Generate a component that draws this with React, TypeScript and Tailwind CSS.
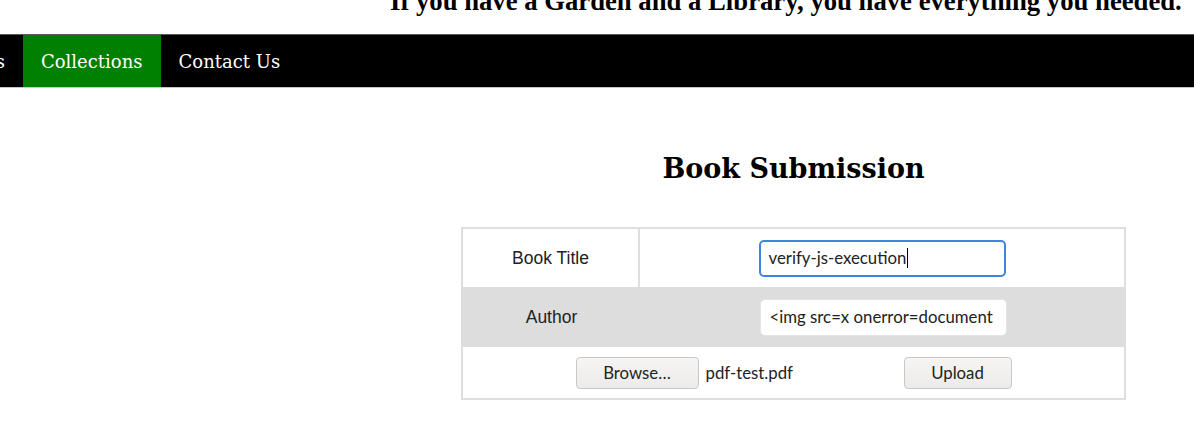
export default function App() {
  return (
    <div className="w-[1194px] h-[437px] overflow-hidden bg-white relative">
      <div className="h-[34px] overflow-hidden">
        <h3
          className="mt-[-13px] ml-[390px] whitespace-nowrap text-[26.7px] font-bold text-black leading-[28px]"
          style={{ fontFamily: '"Liberation Serif", serif' }}
        >
          If you have a Garden and a Library, you have everything you needed.
        </h3>
      </div>
      <nav
        className="flex h-[54px] bg-black border-t border-t-[#5a5a5a] border-b border-b-[#c8c8c8] text-[18px] text-white"
        style={{ fontFamily: '"DejaVu Serif", serif' }}
      >
        <a className="flex items-center justify-end pr-[18px] w-[94px] ml-[-71px] shrink-0 whitespace-nowrap">Books</a>
        <a className="flex items-center px-[18px] bg-[#008000] whitespace-nowrap">Collections</a>
        <a className="flex items-center px-[18px] whitespace-nowrap">Contact Us</a>
      </nav>
      <div className="ml-[461px] w-[665px]">
        <h2
          className="mt-[64px] text-center text-[27px] font-bold text-black leading-[34px]"
          style={{ fontFamily: '"DejaVu Serif", serif' }}
        >
          Book Submission
        </h2>
        <div
          className="mt-[41px] border-2 border-[#dedede] text-[17.5px] text-[#222]"
          style={{ fontFamily: '"Liberation Sans", sans-serif' }}
        >
          <div className="flex h-[58px]">
            <div className="w-[177px] flex items-center justify-center border-r-2 border-r-[#dedede]">Book Title</div>
            <div className="flex-1 flex items-center justify-center">
              <div
                className="w-[247px] h-[37px] rounded-[5px] border-2 border-[#3d86e0] flex items-center px-[8px] text-[16.8px] text-[#222]"
                style={{ fontFamily: 'Lato, "Open Sans", sans-serif' }}
              >
                verify-js-execution<span className="w-px h-[20px] bg-black ml-px" />
              </div>
            </div>
          </div>
          <div className="flex h-[60px] bg-[#dddddd]">
            <div className="w-[177px] flex items-center justify-center">Author</div>
            <div className="flex-1 flex items-center justify-center pl-[2px]">
              <div
                className="w-[247px] h-[37px] rounded-[5px] bg-white border border-[#e4e4e4] flex items-center px-[9px] text-[16.8px] text-[#222] overflow-hidden whitespace-nowrap"
                style={{ fontFamily: 'Lato, "Open Sans", sans-serif' }}
              >
                &lt;img src=x onerror=document
              </div>
            </div>
          </div>
          <div
            className="flex h-[51px] items-center justify-center text-[16.8px] text-[#222]"
            style={{ fontFamily: 'Lato, "Open Sans", sans-serif' }}
          >
            <div className="w-[123px] h-[32px] rounded-[4px] border border-[#c8c8c8] bg-gradient-to-b from-[#f6f5f4] to-[#edebe9] flex items-center justify-center">
              Browse…
            </div>
            <span className="ml-[7px] w-[198px]">pdf-test.pdf</span>
            <div className="w-[108px] h-[32px] rounded-[4px] border border-[#c8c8c8] bg-gradient-to-b from-[#f6f5f4] to-[#edebe9] flex items-center justify-center">
              Upload
            </div>
          </div>
        </div>
      </div>
    </div>
  );
}
